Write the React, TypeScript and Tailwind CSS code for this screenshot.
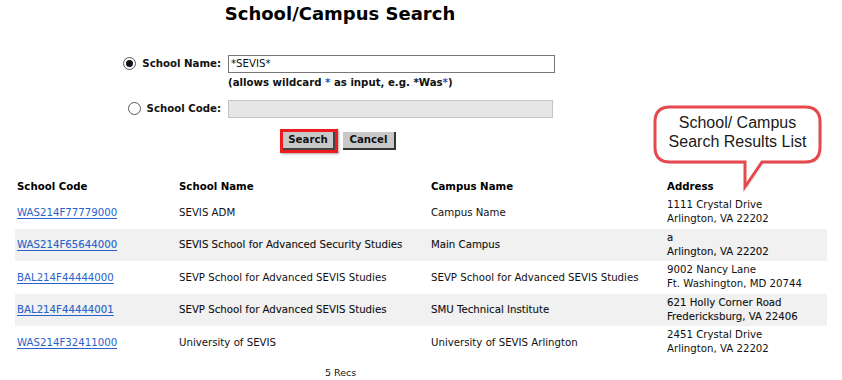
import React from 'react';

type Row = {
  code: string;
  name: string;
  campus: string;
  addr1: string;
  addr2: string;
};

const ROWS: Row[] = [
  { code: 'WAS214F77779000', name: 'SEVIS ADM', campus: 'Campus Name', addr1: '1111 Crystal Drive', addr2: 'Arlington, VA 22202' },
  { code: 'WAS214F65644000', name: 'SEVIS School for Advanced Security Studies', campus: 'Main Campus', addr1: 'a', addr2: 'Arlington, VA 22202' },
  { code: 'BAL214F44444000', name: 'SEVP School for Advanced SEVIS Studies', campus: 'SEVP School for Advanced SEVIS Studies', addr1: '9002 Nancy Lane', addr2: 'Ft. Washington, MD 20744' },
  { code: 'BAL214F44444001', name: 'SEVP School for Advanced SEVIS Studies', campus: 'SMU Technical Institute', addr1: '621 Holly Corner Road', addr2: 'Fredericksburg, VA 22406' },
  { code: 'WAS214F32411000', name: 'University of SEVIS', campus: 'University of SEVIS Arlington', addr1: '2451 Crystal Drive', addr2: 'Arlington, VA 22202' },
];

function Radio({ checked }: { checked?: boolean }) {
  return (
    <span className="inline-flex h-[13px] w-[13px] items-center justify-center rounded-full border border-[#5a5a5a] bg-white">
      {checked && <span className="h-[7px] w-[7px] rounded-full bg-[#111]" />}
    </span>
  );
}

function Callout() {
  // speech bubble pointing down at the Address column
  return (
    <div className="absolute left-[650px] top-[102px] h-[95px] w-[176px]">
      <svg width="176" height="95" viewBox="0 0 176 95" className="absolute inset-0">
        <path
          d="M20 5 H155 Q170 5 170 20 V45 Q170 60 155 60 H112 L95 85 V60 H20 Q5 60 5 45 V20 Q5 5 20 5 Z"
          fill="#ddd"
          transform="translate(2 2)"
          opacity="0.6"
        />
        <path
          d="M20 5 H155 Q170 5 170 20 V45 Q170 60 155 60 H112 L95 85 V60 H20 Q5 60 5 45 V20 Q5 5 20 5 Z"
          fill="#fff"
          stroke="#e5484d"
          strokeWidth="3"
        />
      </svg>
      <div className="absolute left-[5px] top-[11px] w-[165px] text-center font-['Liberation_Sans',Arial,sans-serif] text-[16px] leading-[19px] text-[#1a1a1a]">
        School/ Campus
        <br />
        Search Results List
      </div>
    </div>
  );
}

export default function App() {
  return (
    <div className="relative h-[380px] w-[842px] overflow-hidden bg-white font-['DejaVu_Sans',Verdana,sans-serif] text-[10.2px] text-[#111]">
      {/* Title */}
      <div className="w-[680px] pt-[3px] text-center text-[18px] font-bold leading-[22px] text-black">
        School/Campus Search
      </div>

      {/* Search form */}
      <div className="mt-[30px] flex flex-col">
        <div className="flex items-center">
          <div className="flex w-[221px] items-center justify-end gap-[6px] font-bold">
            <Radio checked />
            <span>School Name:</span>
          </div>
          <div className="ml-[7px] flex h-[18px] w-[327px] items-center border border-[#777] px-[2px]">
            *SEVIS*
          </div>
        </div>
        <div className="ml-[228px] mt-[3px] font-bold leading-[14px]">
          (allows wildcard <span className="text-[#1a55c7]">*</span> as input, e.g. *Was<span className="text-[#1a55c7]">*</span>)
        </div>
        <div className="mt-[10px] flex items-center">
          <div className="flex w-[221px] items-center justify-end gap-[6px] font-bold">
            <Radio />
            <span>School Code:</span>
          </div>
          <div className="ml-[7px] h-[18px] w-[325px] border border-[#c4c4c4] bg-[#e6e6e6]" />
        </div>
        <div className="ml-[280px] mt-[11px] flex items-center gap-[5px]">
          <div className="border-[3px] border-[#ee1c1c] shadow-[1px_1px_2px_rgba(0,0,0,0.35)]">
            <div className="flex h-[18px] w-[52px] items-center justify-center border-b-2 border-r-2 border-b-[#444] border-r-[#444] bg-[#c8c8c8] font-bold">
              Search
            </div>
          </div>
          <div className="flex h-[18px] w-[53px] items-center justify-center border-b-2 border-r-2 border-b-[#333] border-r-[#333] bg-[#c8c8c8] font-bold">
            Cancel
          </div>
        </div>
      </div>

      {/* Results table */}
      <div className="ml-[15px] mt-[24px] w-[812px]">
        <div className="grid h-[19px] grid-cols-[164px_252px_236px_1fr] items-center font-bold text-black">
          <div className="pl-[2px]">School Code</div>
          <div>School Name</div>
          <div>Campus Name</div>
          <div>Address</div>
        </div>
        {ROWS.map((r, i) => (
          <div
            key={r.code}
            className={`grid h-[32.5px] grid-cols-[164px_252px_236px_1fr] items-center ${i % 2 === 1 ? 'bg-[#f1f1f1] [-webkit-text-stroke:0.12px]' : 'bg-white'}`}
          >
            <div className="pl-[2px]">
              <span className="text-[#2a62c9] underline underline-offset-2">{r.code}</span>
            </div>
            <div>{r.name}</div>
            <div>{r.campus}</div>
            <div className="leading-[14px]">
              <div>{r.addr1}</div>
              <div>{r.addr2}</div>
            </div>
          </div>
        ))}
        <div className="ml-[310px] mt-[7px] text-[9.5px]">5 Recs</div>
      </div>

      <Callout />
    </div>
  );
}
